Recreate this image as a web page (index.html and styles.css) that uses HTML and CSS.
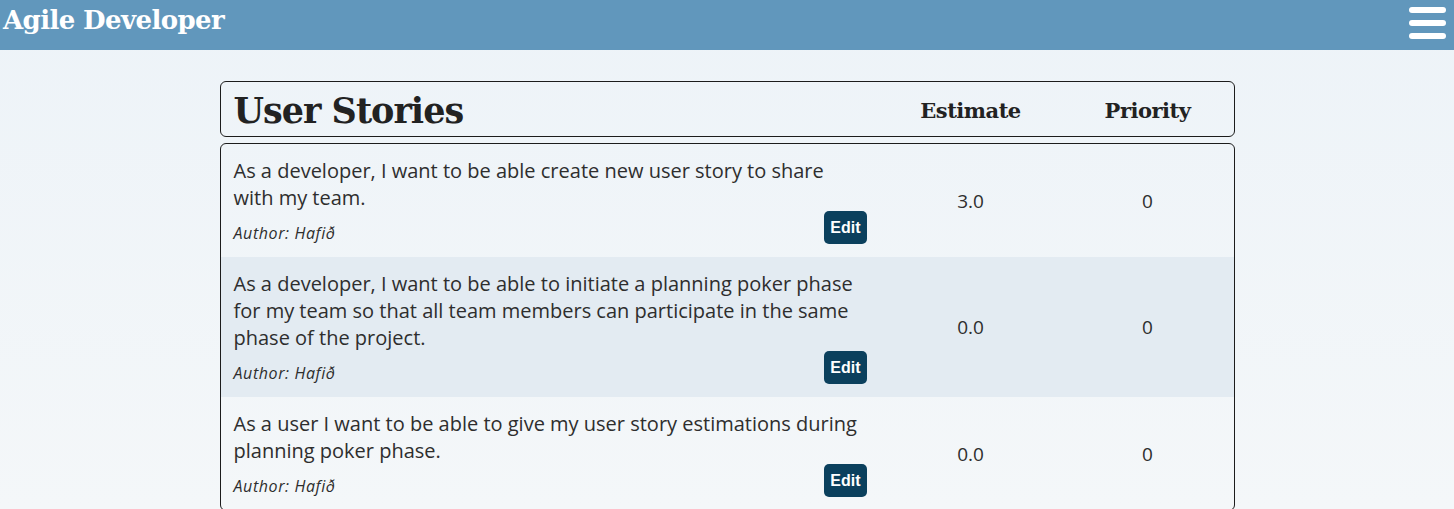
FILE: index.html
```html
<!DOCTYPE html>
<html lang="en">
<head>
<meta charset="utf-8">
<title>Agile Developer</title>
<link rel="stylesheet" href="styles.css">
</head>
<body>
<header class="topbar">
  <h1 class="brand">Agile Developer</h1>
  <button class="menu" aria-label="Menu">
    <span class="bar"></span><span class="bar"></span><span class="bar"></span>
  </button>
</header>
<main class="content">
  <div class="card head-card">
    <h2 class="title">User Stories</h2>
    <div class="col-head">Estimate</div>
    <div class="col-head">Priority</div>
  </div>
  <div class="card list-card">
    <div class="story">
      <div class="story-main">
        <p class="story-text">As a developer, I want to be able create new user story to share with my team.</p>
        <div class="story-foot">
          <span class="author">Author: Hafið</span>
          <button class="edit">Edit</button>
        </div>
      </div>
      <div class="cell">3.0</div>
      <div class="cell">0</div>
    </div>
    <div class="story alt">
      <div class="story-main">
        <p class="story-text">As a developer, I want to be able to initiate a planning poker phase for my team so that all team members can participate in the same phase of the project.</p>
        <div class="story-foot">
          <span class="author">Author: Hafið</span>
          <button class="edit">Edit</button>
        </div>
      </div>
      <div class="cell">0.0</div>
      <div class="cell">0</div>
    </div>
    <div class="story">
      <div class="story-main">
        <p class="story-text">As a user I want to be able to give my user story estimations during planning poker phase.</p>
        <div class="story-foot">
          <span class="author">Author: Hafið</span>
          <button class="edit">Edit</button>
        </div>
      </div>
      <div class="cell">0.0</div>
      <div class="cell">0</div>
    </div>
  </div>
</main>
</body>
</html>
```
FILE: styles.css
```css
* { box-sizing: border-box; }
html, body { height: 100%; }
body {
  margin: 0;
  font-family: "Open Sans", "Noto Sans", sans-serif;
  color: #2e2e2e;
  background: linear-gradient(#edf3f8, #f4f7f9) fixed;
}
.topbar {
  height: 50px;
  background: #6197bc;
  display: flex;
  align-items: flex-start;
  justify-content: space-between;
  padding: 0 8px 0 3px;
}
.brand {
  margin: 0;
  font-family: "DejaVu Serif", serif;
  font-weight: bold;
  font-size: 26px;
  letter-spacing: -0.6px;
  line-height: 41px;
  color: #fff;
}
.menu {
  margin: 7px 0 0;
  padding: 0;
  border: 0;
  background: none;
  display: flex;
  flex-direction: column;
  gap: 7px;
}
.bar {
  display: block;
  width: 37px;
  height: 6px;
  border-radius: 3px;
  background: #fff;
}
.content {
  width: 1015px;
  margin: 31px auto 0;
  display: flex;
  flex-direction: column;
  gap: 6px;
}
.card {
  border: 1px solid #1c1c1c;
  border-radius: 6px;
}
.head-card {
  height: 56px;
  display: grid;
  grid-template-columns: 1fr 182px 172px;
  align-items: center;
  padding: 3px 0 0 13px;
}
.title {
  margin: 0;
  font-family: "DejaVu Serif", serif;
  font-weight: bold;
  font-size: 35px;
  letter-spacing: -1px;
  color: #222;
}
.col-head {
  text-align: center;
  font-family: "DejaVu Serif", serif;
  font-weight: bold;
  font-size: 21px;
  letter-spacing: -0.5px;
  color: #222;
}
.list-card {
  overflow: hidden;
}
.story {
  display: grid;
  grid-template-columns: 1fr 182px 172px;
  align-items: center;
  padding: 13px 0 13px 13px;
}
.story.alt { background: #e3ebf2; }
.story-main {
  padding-right: 13px;
}
.story-text {
  margin: 0;
  font-size: 20px;
  line-height: 27px;
}
.story-foot {
  display: flex;
  justify-content: space-between;
  align-items: flex-end;
}
.author {
  font-style: italic;
  font-size: 16px;
  line-height: 22px;
  letter-spacing: 0.6px;
}
.edit {
  height: 33px;
  padding: 0 6px;
  border: 0;
  border-radius: 5px;
  background: #0b405d;
  color: #fff;
  font-family: "Liberation Sans", Arial, sans-serif;
  font-weight: bold;
  font-size: 16px;
}
.cell {
  text-align: center;
  font-size: 19px;
}
```
